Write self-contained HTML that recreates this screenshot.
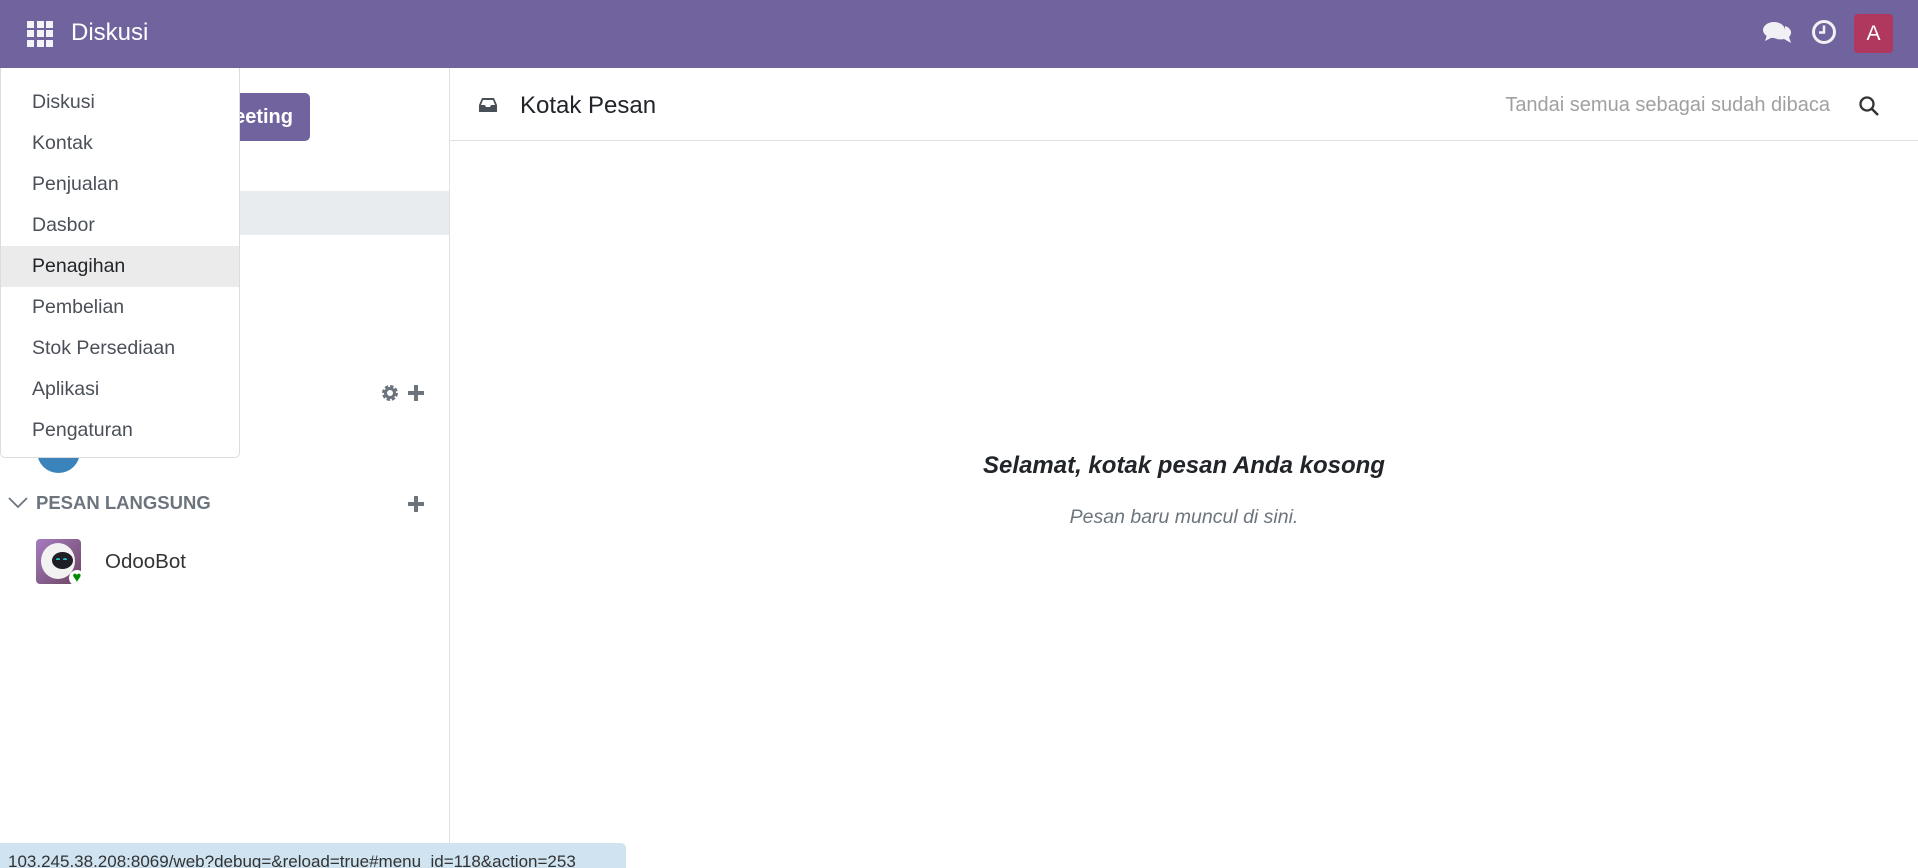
<!DOCTYPE html>
<html><head><meta charset="utf-8"><style>
*{margin:0;padding:0;box-sizing:border-box}
body{width:1918px;height:862px;overflow:hidden;background:#fff;font-family:"Liberation Sans",sans-serif;position:relative;color:#212529}
.nav{position:absolute;left:0;top:0;width:1918px;height:68px;background:#71639e}
.grid{position:absolute;left:27px;top:21px;width:26px;height:26px;display:grid;grid-template-columns:repeat(3,7px);grid-gap:2px 2.5px}
.grid i{background:#f3f2f7;width:7px;height:7px;display:block}
.brand{position:absolute;left:71px;top:19px;color:#fff;font-size:24px}
.side{position:absolute;left:0;top:68px;width:450px;height:794px;border-right:1px solid #dee2e6}
.btn{position:absolute;left:150px;top:25px;width:160px;height:48px;background:#71639e;border-radius:5px;color:#fff;font-weight:bold;font-size:20px;line-height:48px;text-align:right;padding-right:17px}
.active{position:absolute;left:0;top:123px;width:449px;height:44px;background:#e9ecef}
.dd{position:absolute;left:0;top:68px;width:240px;height:390px;background:#fff;border:1px solid #dcdcdc;border-top:none;border-radius:0 0 5px 5px;padding-top:14px}
.dd div{height:41px;line-height:41px;padding-left:31px;font-size:19.5px;color:#4b5058}
.dd .h{background:#ebebeb;color:#212529}
.main{position:absolute;left:450px;top:68px;right:0;height:73px;border-bottom:1px solid #dee2e6}
.status{position:absolute;left:0;top:843px;width:626px;height:25px;background:#cfe3f0;border-radius:0 5px 0 0;font-size:17px;color:#333;padding:9px 0 0 8px;white-space:nowrap;overflow:hidden}
</style></head><body>
<div class="nav">
 <div class="grid"><i></i><i></i><i></i><i></i><i></i><i></i><i></i><i></i><i></i></div>
 <div class="brand">Diskusi</div>
 <svg style="position:absolute;left:1763px;top:20px" width="30" height="26" viewBox="0 0 30 26"><ellipse cx="11" cy="10" rx="11" ry="8" fill="#f1f0f5"/><path d="M4 15 L2 21 L10 17Z" fill="#f1f0f5"/><path d="M22 6 C28 8 30 13 26 17 L28 23 L21 19 C17 20 13 19 11 18 C18 18 23 13 22 6Z" fill="#f1f0f5"/></svg>
 <svg style="position:absolute;left:1811px;top:19px" width="26" height="26" viewBox="0 0 26 26"><circle cx="13" cy="13" r="10.5" fill="none" stroke="#f1f0f5" stroke-width="3"/><path d="M13 6.5V13.5H8" fill="none" stroke="#f1f0f5" stroke-width="2.5"/></svg>
 <div style="position:absolute;left:1854px;top:14px;width:39px;height:39px;background:#b0385e;border-radius:4px;color:#fff;font-size:21px;text-align:center;line-height:39px">A</div>
</div>
<div class="side">
 <div class="btn">eeting</div>
 <div class="active"></div>
 <svg style="position:absolute;left:381px;top:316px" width="18" height="18" viewBox="0 0 18 18"><circle cx="9" cy="9" r="6" fill="none" stroke="#6c757d" stroke-width="4" stroke-dasharray="3 1.7"/><circle cx="9" cy="9" r="4.5" fill="none" stroke="#6c757d" stroke-width="3"/></svg>
 <svg style="position:absolute;left:407px;top:316px" width="18" height="18"><path d="M9 1V17M1 9H17" stroke="#6c757d" stroke-width="4"/></svg>
 <div style="position:absolute;left:37px;top:362px;width:43px;height:43px;border-radius:50%;background:#3a84bb"></div>
 <svg style="position:absolute;left:8px;top:428px" width="20" height="14"><path d="M1 2L10 11L19 2" fill="none" stroke="#6c757d" stroke-width="1.8"/></svg>
 <div style="position:absolute;left:36px;top:424px;font-size:18.5px;font-weight:bold;color:#6c757d">PESAN LANGSUNG</div>
 <svg style="position:absolute;left:407px;top:427px" width="18" height="18"><path d="M9 1V17M1 9H17" stroke="#6c757d" stroke-width="4"/></svg>
 <div style="position:absolute;left:36px;top:471px;width:45px;height:45px;border-radius:4px;background:linear-gradient(135deg,#a77bc0,#6b4660)"></div>
 <div style="position:absolute;left:41px;top:475px;width:34px;height:36px;border-radius:50%;background:#f2f2f2"></div>
 <div style="position:absolute;left:52px;top:484px;width:21px;height:17px;border-radius:50%;background:#1e1e24"></div>
 <div style="position:absolute;left:56px;top:490px;width:4px;height:3px;border-top:2px solid #2bb;border-radius:50%"></div>
 <div style="position:absolute;left:63px;top:490px;width:4px;height:3px;border-top:2px solid #2bb;border-radius:50%"></div>
 <div style="position:absolute;left:69px;top:502px;width:16px;height:16px;border-radius:50%;background:#fff;color:#008a00;font-size:15px;line-height:16px;text-align:center">♥</div>
 <div style="position:absolute;left:105px;top:482px;font-size:20.5px;color:#333">OdooBot</div>
</div>
<div class="dd">
 <div>Diskusi</div><div>Kontak</div><div>Penjualan</div><div>Dasbor</div><div class="h">Penagihan</div><div>Pembelian</div><div>Stok Persediaan</div><div>Aplikasi</div><div>Pengaturan</div>
</div>
<div class="main">
 <svg style="position:absolute;left:28px;top:29px" width="20" height="16" viewBox="0 0 20 16"><path d="M4 1H16L19 8V15H1V8Z" fill="#495057"/><path d="M5 3H15L17 8H13L12 10H8L7 8H3Z" fill="#fff"/></svg>
 <div style="position:absolute;left:70px;top:24px;font-size:24px;color:#212529">Kotak Pesan</div>
 <div style="position:absolute;right:88px;top:26px;font-size:20px;color:#a0a0a0">Tandai semua sebagai sudah dibaca</div>
 <svg style="position:absolute;right:38px;top:27px" width="22" height="22"><circle cx="9" cy="9" r="6.5" fill="none" stroke="#333" stroke-width="2.3"/><path d="M14 14L20 20" stroke="#333" stroke-width="2.5"/></svg>
</div>
<div style="position:absolute;left:450px;right:0;top:452px;text-align:center;font-size:24px;font-weight:bold;font-style:italic;color:#212529">Selamat, kotak pesan Anda kosong</div>
<div style="position:absolute;left:450px;right:0;top:506px;text-align:center;font-size:19.5px;font-style:italic;color:#6c757d">Pesan baru muncul di sini.</div>
<div class="status">103.245.38.208:8069/web?debug=&amp;reload=true#menu_id=118&amp;action=253</div>
</body></html>
